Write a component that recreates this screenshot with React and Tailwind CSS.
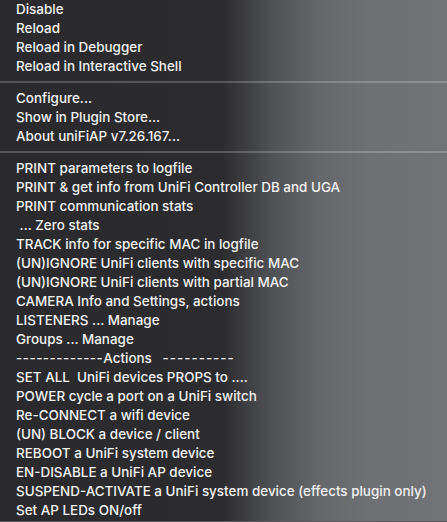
import React from "react";

const groups = [
  ["Disable", "Reload", "Reload in Debugger", "Reload in Interactive Shell"],
  ["Configure...", "Show in Plugin Store...", "About uniFiAP v7.26.167..."],
  [
    "PRINT parameters to logfile",
    "PRINT & get info from UniFi Controller DB and UGA",
    "PRINT communication stats",
    " ... Zero stats",
    "TRACK info for specific MAC in logfile",
    "(UN)IGNORE UniFi clients with specific MAC",
    "(UN)IGNORE UniFi clients with partial MAC",
    "CAMERA Info and Settings, actions",
    "LISTENERS ... Manage",
    "Groups ... Manage",
    "ACTIONS",
    "SET ALL  UniFi devices PROPS to ....",
    "POWER cycle a port on a UniFi switch",
    "Re-CONNECT a wifi device",
    "(UN) BLOCK a device / client",
    "REBOOT a UniFi system device",
    "EN-DISABLE a UniFi AP device",
    "SUSPEND-ACTIVATE a UniFi system device (effects plugin only)",
    "Set AP LEDs ON/off",
  ],
];

export default function App() {
  return (
    <div
      className="w-[447px] h-[522px] overflow-hidden bg-[linear-gradient(to_right,#2a2a2c_0px,#2c2c2e_222px,#4f5054_270px,#66676b_320px,#6f7074_370px,#727377_447px)] text-[#f2f2f2] text-[13.45px] font-medium leading-[19px] border-b border-[#5a5a5c]"
      style={{ fontFamily: "Inter, 'Liberation Sans', sans-serif" }}
    >
      <div className="-mt-[0.5px]">
        {groups.map((items, gi) => (
          <div key={gi}>
            {gi > 0 && (
              <div className="h-[13px] flex items-center">
                <div className="w-full h-[2px] bg-white/20" />
              </div>
            )}
            {items.map((label) =>
              label === "ACTIONS" ? (
                <div key={label} className="pl-[16px] h-[19px] whitespace-pre">
                  <span className="tracking-[0.5px]">-------------</span>
                  Actions{"   "}
                  <span className="tracking-[1px]">----------</span>
                </div>
              ) : (
                <div key={label} className="pl-[16px] h-[19px] whitespace-pre">
                  {label}
                </div>
              )
            )}
          </div>
        ))}
      </div>
    </div>
  );
}
